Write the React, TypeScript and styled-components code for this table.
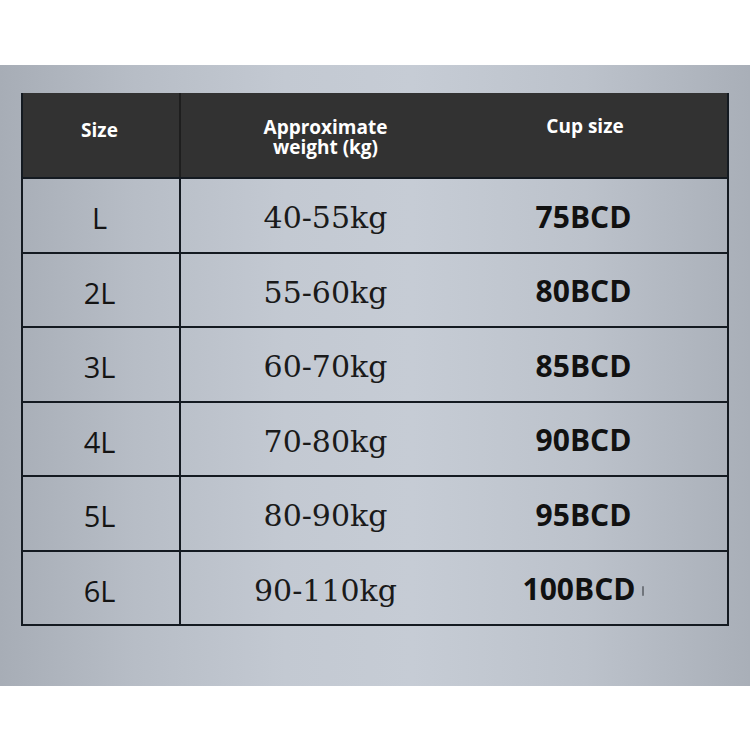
import React from "react";
import styled, { createGlobalStyle } from "styled-components";

const GlobalStyle = createGlobalStyle`
  html, body {
    margin: 0;
    padding: 0;
    background: #ffffff;
  }
  #root {
    width: 750px;
    height: 750px;
  }
`;

const Page = styled.div`
  width: 750px;
  height: 750px;
  background: #ffffff;
  padding-top: 65px;
  box-sizing: border-box;
`;

const Panel = styled.section`
  width: 750px;
  height: 621px;
  box-sizing: border-box;
  padding: 28px 21px 0 21px;
  background:
    linear-gradient(
      90deg,
      #a7adb6 0%,
      #b7bdc6 18%,
      #c3c9d2 38%,
      #c6ccd5 55%,
      #bcc2cb 78%,
      #a9afb8 100%
    );
`;

const Table = styled.div`
  width: 708px;
  box-sizing: border-box;
  border-left: 2px solid #141a21;
  border-right: 2px solid #141a21;
  border-bottom: 2px solid #141a21;
`;

const Row = styled.div<{ $header?: boolean; $last?: boolean }>`
  display: grid;
  grid-template-columns: 158px 289px 1fr;
  box-sizing: border-box;
  height: ${(p) => (p.$header ? "86px" : p.$last ? "72.5px" : "74.5px")};
  background: ${(p) => (p.$header ? "#323232" : "transparent")};
  border-bottom: ${(p) => (p.$last ? "none" : "2px solid #141a21")};
`;

const HeadCell = styled.div<{ $top: number; $divider?: boolean; $padRight?: number }>`
  display: flex;
  justify-content: center;
  align-items: flex-start;
  box-sizing: border-box;
  padding-top: ${(p) => p.$top}px;
  padding-right: ${(p) => p.$padRight ?? 0}px;
  border-right: ${(p) => (p.$divider ? "2px solid #1e1e1e" : "none")};
  color: #ffffff;
  font-family: "Open Sans", "Noto Sans", sans-serif;
  font-weight: 700;
  font-size: 19px;
  line-height: 20px;
  text-align: center;
`;

const Cell = styled.div<{ $divider?: boolean; $padRight?: number }>`
  display: flex;
  justify-content: center;
  align-items: center;
  box-sizing: border-box;
  padding-top: 3px;
  padding-right: ${(p) => p.$padRight ?? 0}px;
  border-right: ${(p) => (p.$divider ? "2px solid #141a21" : "none")};
  color: #141414;
`;

const SizeText = styled.span`
  font-family: "Open Sans", "Noto Sans", sans-serif;
  font-weight: 400;
  font-size: 29px;
  line-height: 1;
  padding-top: 2px;
`;

const WeightText = styled.span`
  font-family: "DejaVu Serif", "Liberation Serif", serif;
  font-weight: 400;
  font-size: 30px;
  line-height: 1;
  color: #1a1a1a;
  padding-top: 3px;
`;

const CupText = styled.span`
  font-family: "Open Sans", "Noto Sans", sans-serif;
  font-weight: 700;
  font-size: 30px;
  line-height: 1;
  color: #111111;
  display: inline-flex;
  align-items: center;
`;

const TailMark = styled.span`
  display: inline-block;
  width: 2px;
  height: 10px;
  border-radius: 1px;
  background: #70757c;
  margin-left: 7px;
  margin-top: 3px;
`;

const rows = [
  { size: "L", weight: "40-55kg", cup: "75BCD" },
  { size: "2L", weight: "55-60kg", cup: "80BCD" },
  { size: "3L", weight: "60-70kg", cup: "85BCD" },
  { size: "4L", weight: "70-80kg", cup: "90BCD" },
  { size: "5L", weight: "80-90kg", cup: "95BCD" },
  { size: "6L", weight: "90-110kg", cup: "100BCD", tail: true },
];

export default function App() {
  return (
    <>
      <GlobalStyle />
      <Page>
        <Panel>
          <Table>
            <Row $header>
              <HeadCell $top={27} $divider $padRight={3}>
                Size
              </HeadCell>
              <HeadCell $top={24}>
                Approximate
                <br />
                weight (kg)
              </HeadCell>
              <HeadCell $top={23} $padRight={27}>
                Cup size
              </HeadCell>
            </Row>
            {rows.map((r, i) => (
              <Row key={r.size} $last={i === rows.length - 1}>
                <Cell $divider $padRight={3}>
                  <SizeText>{r.size}</SizeText>
                </Cell>
                <Cell>
                  <WeightText>{r.weight}</WeightText>
                </Cell>
                <Cell $padRight={30}>
                  <CupText>
                    {r.cup}
                    {r.tail && <TailMark />}
                  </CupText>
                </Cell>
              </Row>
            ))}
          </Table>
        </Panel>
      </Page>
    </>
  );
}
